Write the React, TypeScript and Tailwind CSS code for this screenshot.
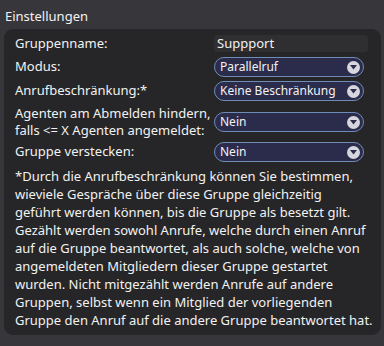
const font = { fontFamily: '"Noto Sans", "Open Sans", sans-serif' };

const Select = ({ value }: { value: string }) => (
  <div className="flex items-center justify-between w-[150px] h-[20px] rounded-full border border-[#6f8db4] bg-[#2b2b4c] pl-[5px] pr-[3px]">
    <span className="text-[12px] leading-none text-[#f2f2f2]">{value}</span>
    <span className="flex items-center justify-center w-[13px] h-[13px] rounded-full bg-[#d6d6de]">
      <svg width="7" height="5" viewBox="0 0 7 5">
        <path d="M0 0 L7 0 L3.5 4.5 Z" fill="#2b2b4c" />
      </svg>
    </span>
  </div>
);

const lines = [
  "*Durch die Anrufbeschränkung können Sie bestimmen,",
  "wieviele Gespräche über diese Gruppe gleichzeitig",
  "geführt werden können, bis die Gruppe als besetzt gilt.",
  "Gezählt werden sowohl Anrufe, welche durch einen Anruf",
  "auf die Gruppe beantwortet, als auch solche, welche von",
  "angemeldeten Mitgliedern dieser Gruppe gestartet",
  "wurden. Nicht mitgezählt werden Anrufe auf andere",
  "Gruppen, selbst wenn ein Mitglied der vorliegenden",
  "Gruppe den Anruf auf die andere Gruppe beantwortet hat.",
];

const App = () => {
  return (
    <div className="w-[384px] h-[346px] bg-[#37373b] text-[#f2f2f2] pt-[7px] px-1" style={font}>
      <div className="text-[13px] leading-[18px] pl-[1px]">Einstellungen</div>
      <div className="mt-[4px] h-[306px] w-[377px] rounded-[9px] bg-[#262628] pl-[11px] pr-[13px] pt-[6px] text-[13px]">
        <div className="flex items-center h-[17px]">
          <span className="w-[199px]">Gruppenname:</span>
          <div className="flex-1 h-[17px] rounded-[3px] bg-[#2f2f32] pl-[3px] leading-[17px]">Suppport</div>
        </div>
        <div className="flex items-center h-[20px] mt-[5px]">
          <span className="w-[199px]">Modus:</span>
          <Select value="Parallelruf" />
        </div>
        <div className="flex items-center h-[20px] mt-[4px]">
          <span className="w-[199px]">Anrufbeschränkung:*</span>
          <Select value="Keine Beschränkung" />
        </div>
        <div className="flex items-center mt-[4px]">
          <span className="w-[199px] leading-[17px]">
            Agenten am Abmelden hindern,
            <br />
            falls &lt;= X Agenten angemeldet:
          </span>
          <Select value="Nein" />
        </div>
        <div className="flex items-center h-[20px] mt-[3px]">
          <span className="w-[199px]">Gruppe verstecken:</span>
          <Select value="Nein" />
        </div>
        <p className="mt-[5px] leading-[18px] -mr-[10px] whitespace-nowrap">
          {lines.map((l) => (
            <span key={l} className="block">
              {l}
            </span>
          ))}
        </p>
      </div>
    </div>
  );
};

export default App;
